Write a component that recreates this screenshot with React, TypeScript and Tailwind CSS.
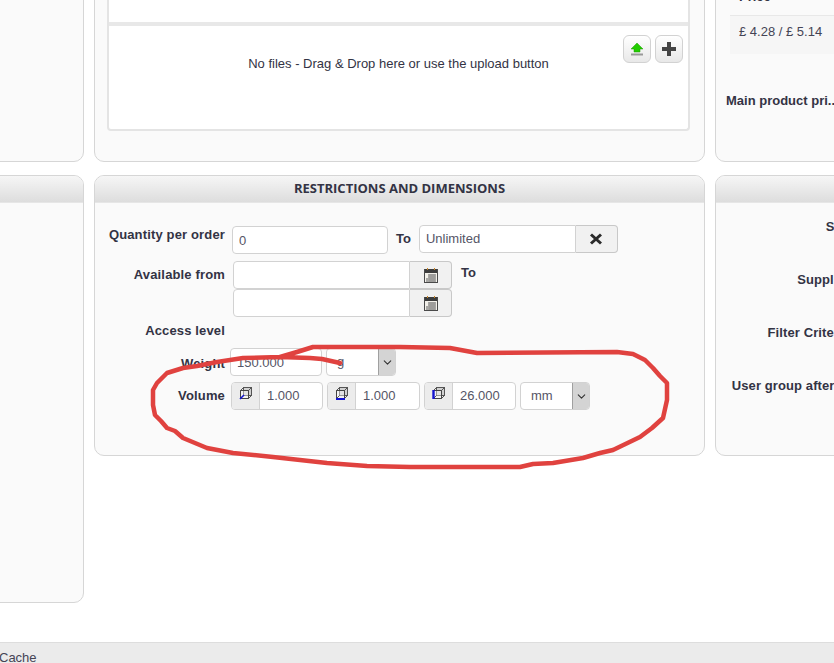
import React from "react";
import { ChevronDown } from "lucide-react";

const bodyFont = "font-['Liberation_Sans',Arial,sans-serif]";

const CalendarIcon = () => (
  <svg width="14" height="15" viewBox="0 0 14 15">
    <rect x="0.5" y="1.5" width="13" height="13" fill="#f2f0ea" stroke="#4a4a4a" />
    <rect x="1" y="1" width="12" height="4" fill="#3d3d3d" />
    <rect x="3" y="0" width="1" height="2" fill="#c9862a" />
    <rect x="10" y="0" width="1" height="2" fill="#c9862a" />
    <path d="M4 7h8M4 9h8M2 11h10M2 13h10" stroke="#5f5f5f" strokeWidth="1" />
    <path d="M6 6v8M8 6v8M10 6v8" stroke="#8d8d8d" strokeWidth="0.7" />
  </svg>
);

const CubeIcon = ({ axis }: { axis: "x" | "y" | "z" }) => (
  <svg width="14" height="14" viewBox="0 0 14 14" fill="none">
    <rect x="4.5" y="1.5" width="8" height="8" stroke="#555" fill="#9a9a9a55" />
    <rect x="1.5" y="4.5" width="8" height="8" stroke="#444" fill="#ffffff66" />
    <path d="M1.5 4.5l3-3M9.5 4.5l3-3M9.5 12.5l3-3M1.5 12.5l3-3" stroke="#555" />
    {axis === "z" && <path d="M1 13l4-4" stroke="#1414d0" strokeWidth="1.6" />}
    {axis === "x" && <path d="M1 13h9" stroke="#1414d0" strokeWidth="1.8" />}
    {axis === "y" && <path d="M1.5 4v9" stroke="#1414d0" strokeWidth="2.4" />}
  </svg>
);

const Panel = ({
  title,
  className,
  children,
}: {
  title?: string;
  className: string;
  children?: React.ReactNode;
}) => (
  <div className={`border border-[#d6d6d6] rounded-[10px] bg-[#fafafa] overflow-hidden ${className}`}>
    {title !== undefined && (
      <div className="h-[27px] border-b border-[#e6e6e6] bg-gradient-to-b from-[#f6f6f6] to-[#dddddd] flex items-center justify-center font-['Open_Sans',sans-serif] font-bold text-[13px] text-[#333344]">
        {title}
      </div>
    )}
    {children}
  </div>
);

const Label = ({ children, className = "" }: { children: React.ReactNode; className?: string }) => (
  <div className={`w-[130px] text-right font-bold text-[13px] tracking-[0.15px] leading-[16px] text-[#333344] shrink-0 ${className}`}>
    {children}
  </div>
);

const TextInput = ({ value, className }: { value: string; className: string }) => (
  <input
    readOnly
    value={value}
    className={`h-[28px] px-[6px] bg-white border border-[#d2d2d2] rounded-[4px] text-[13px] text-[#555566] outline-none ${className}`}
  />
);

const DateInput = () => (
  <div className="w-[219px] h-[28px] flex">
    <input readOnly className="flex-1 min-w-0 bg-white border border-[#d2d2d2] rounded-l-[4px]" />
    <div className="w-[42px] bg-[#f1f1f1] border border-l-0 border-[#c8c8c8] rounded-r-[4px] flex items-center justify-center">
      <CalendarIcon />
    </div>
  </div>
);

const Select = ({ value }: { value: string }) => (
  <div className="w-[70px] h-[28px] flex bg-white border border-[#d2d2d2] rounded-[4px] overflow-hidden">
    <div className="flex-1 pl-[10px] flex items-center text-[13px] text-[#555566]">{value}</div>
    <div className="w-[17px] bg-[#d4d4d4] border-l border-[#a0a0a0] flex items-center justify-center">
      <ChevronDown size={13} color="#333" strokeWidth={2} />
    </div>
  </div>
);

const CubeInput = ({ axis, value, className }: { axis: "x" | "y" | "z"; value: string; className: string }) => (
  <div className={`h-[28px] flex bg-white border border-[#d2d2d2] rounded-[4px] overflow-hidden ${className}`}>
    <div className="w-[28px] bg-[#ececec] border-r border-[#d2d2d2] flex justify-center pt-[3px] shrink-0">
      <div className="h-[14px]">
        <CubeIcon axis={axis} />
      </div>
    </div>
    <div className="pl-[7px] flex items-center text-[13px] text-[#555566]">{value}</div>
  </div>
);

const RestrictionsForm = () => (
  <div className="pt-[23px]">
    <div className="flex">
      <Label className="mt-[1px]">Quantity per order</Label>
      <TextInput value="0" className="w-[156px] ml-[7px]" />
      <div className="ml-[8px] mt-[5px] text-[13px] font-bold text-[#333344] leading-[16px]">To</div>
      <div className="ml-[8px] w-[199px] h-[28px] flex -mt-[1px]">
        <input
          readOnly
          value="Unlimited"
          className="flex-1 min-w-0 px-[6px] bg-white border border-[#d2d2d2] rounded-l-[4px] text-[13px] text-[#555566] outline-none"
        />
        <div className="w-[42px] bg-[#f1f1f1] border border-l-0 border-[#c8c8c8] rounded-r-[4px] flex items-center justify-center">
          <svg width="14" height="12" viewBox="0 0 14 12">
            <path d="M2 1.5l10 9M12 1.5l-10 9" stroke="#2b2b2b" strokeWidth="3" />
          </svg>
        </div>
      </div>
    </div>
    <div className="flex mt-[7px]">
      <Label className="mt-[6px]">Available from</Label>
      <div className="ml-[8px]">
        <DateInput />
        <DateInput />
      </div>
      <div className="ml-[9px] mt-[4px] text-[13px] font-bold text-[#333344] leading-[16px]">To</div>
    </div>
    <Label className="mt-[6px]">Access level</Label>
    <div className="flex mt-[9px]">
      <Label className="mt-[8px]">Weight</Label>
      <TextInput value="150.000" className="w-[92px] ml-[5px]" />
      <div className="ml-[4px]">
        <Select value="g" />
      </div>
    </div>
    <div className="flex mt-[6px]">
      <Label className="mt-[6px]">Volume</Label>
      <div className="ml-[6px] flex gap-[4px]">
        <CubeInput axis="z" value="1.000" className="w-[92px]" />
        <CubeInput axis="x" value="1.000" className="w-[93px]" />
        <CubeInput axis="y" value="26.000" className="w-[92px]" />
        <Select value="mm" />
      </div>
    </div>
  </div>
);

const RightLabel = ({ children, className }: { children: string; className: string }) => (
  <div className={`pr-[2px] text-right font-bold text-[13px] tracking-[0.1px] leading-[16px] text-[#333344] whitespace-nowrap ${className}`}>
    {children}
  </div>
);

const Scribble = () => (
  <svg className="absolute left-0 top-0 pointer-events-none" width="834" height="663" fill="none">
    <path
      d="M340 363 L322 359 L310 358 L280 357 L243 358 L217 362 L197 366 L183 368 L167 373 L157 383 L153 390 L153 405 L155 415 L161 421 L167 428 L175 431 L183 438 L207 448 L233 453 L273 457 L327 463 L367 466 L410 467 L520 467 L533 464 L553 463 L583 458 L600 453 L613 450 L640 437 L652 428 L663 418 L667 400 L667 383 L660 376 L653 368 L645 360 L633 354 L617 352 L477 353 L450 348 L400 347 L313 347 L297 352 L280 357"
      stroke="#e0423f"
      strokeWidth="4.5"
      strokeLinejoin="round"
      strokeLinecap="round"
    />
  </svg>
);

export default function App() {
  return (
    <div className={`relative w-[834px] h-[663px] overflow-hidden bg-white flex flex-col ${bodyFont}`}>
      <div className="flex-1 min-h-0 overflow-hidden">
        <div className="flex gap-[10px] -ml-[116px] -mt-[100px]">
          <div className="w-[200px] shrink-0 flex flex-col gap-[13px]">
            <Panel className="h-[262px]" />
            <Panel title="" className="h-[428px]" />
          </div>

          <div className="w-[611px] shrink-0 flex flex-col gap-[13px]">
            <Panel className="h-[262px] pl-[12px] pr-[14px]">
              <div className="h-[230px] border-2 border-t-0 border-[#e4e4e4] rounded-b-[4px] bg-white">
                <div className="h-[125px] border-b-[4px] border-[#e8e8e8]" />
                <div className="relative h-[101px] pt-[30px] text-center text-[13px] leading-[16px] text-[#333344]">
                  No files - Drag &amp; Drop here or use the upload button
                  <div className="absolute right-[5px] top-[9px] flex gap-[4px]">
                    <div className="w-[28px] h-[28px] border border-[#d2d2d2] rounded-[6px] bg-gradient-to-b from-[#ffffff] to-[#e8e8e8] flex items-center justify-center">
                      <svg width="14" height="14" viewBox="0 0 14 14">
                        <path d="M7 1l6 6H10v3H4V7H1z" fill="#22cc00" stroke="#1c9a00" strokeWidth="0.5" />
                        <path d="M1 12.5h12" stroke="#999" strokeWidth="2" />
                      </svg>
                    </div>
                    <div className="w-[28px] h-[28px] border border-[#d2d2d2] rounded-[6px] bg-gradient-to-b from-[#ffffff] to-[#e8e8e8] flex items-center justify-center">
                      <svg width="14" height="14" viewBox="0 0 14 14">
                        <path d="M5 0h4v5h5v4H9v5H5V9H0V5h5z" fill="#444" />
                      </svg>
                    </div>
                  </div>
                </div>
              </div>
            </Panel>
            <Panel title="RESTRICTIONS AND DIMENSIONS" className="h-[281px]">
              <RestrictionsForm />
            </Panel>
          </div>

          <div className="w-[138px] shrink-0 flex flex-col gap-[13px]">
            <Panel className="h-[262px]">
              <div className="ml-[14px] mt-[88px] h-[26px] pl-[9px] text-[13px] font-bold text-[#333344] leading-[16px]">Price</div>
              <div className="ml-[14px] h-[39px] border-t border-[#e8e8e8] bg-[#f6f6f6] pl-[9px] pt-[8px] text-[13px] leading-[16px] text-[#444455]">
                £ 4.28 / £ 5.14
              </div>
              <div className="mt-[39px] pl-[10px] font-bold text-[13px] leading-[16px] text-[#333344] whitespace-nowrap">
                Main product pri...
              </div>
            </Panel>
            <Panel title="" className="h-[281px]">
              <RightLabel className="mt-[16px]">Sku</RightLabel>
              <RightLabel className="mt-[37px]">Supplier</RightLabel>
              <RightLabel className="mt-[37px]">Filter Criteria</RightLabel>
              <RightLabel className="mt-[37px]">User group after p.</RightLabel>
            </Panel>
          </div>
        </div>
      </div>

      <div className="h-[21px] shrink-0 border-t border-[#dddddd] bg-[#ebebeb] pt-[7px] -indent-[1px] text-[13px] leading-[16px] text-[#444455] whitespace-nowrap">
        Cache
      </div>

      <Scribble />
    </div>
  );
}
